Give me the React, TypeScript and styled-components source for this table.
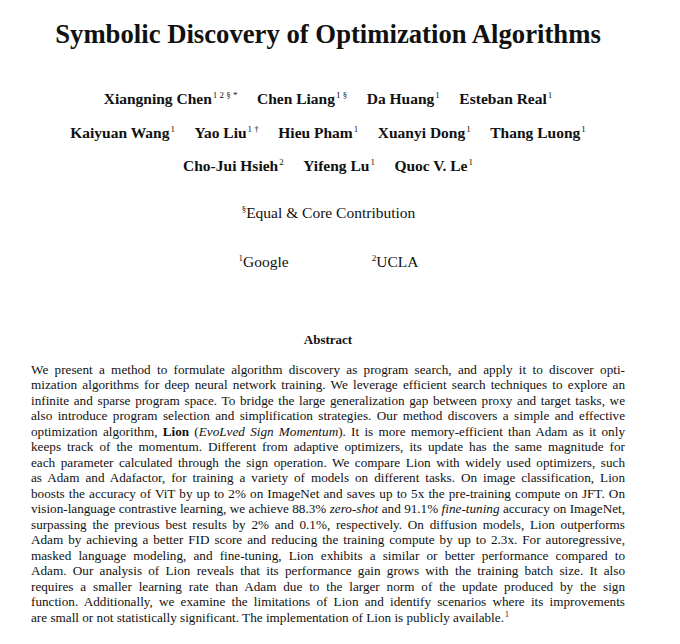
import * as React from "react";
import styled, { createGlobalStyle } from "styled-components";

const Global = createGlobalStyle`
  html, body {
    margin: 0;
    padding: 0;
    background: #ffffff;
  }
  body {
    font-family: "Liberation Serif", "Times New Roman", serif;
    color: #111111;
  }
`;

const Page = styled.main`
  width: 594px;
  margin-left: 31px;
  padding-top: 19px;
`;

const Title = styled.h1`
  margin: 0;
  font-size: 26.7px;
  line-height: 30px;
  font-weight: 700;
  text-align: center;
  color: #111;
`;

const Authors = styled.div`
  margin-top: 33px;
  display: flex;
  flex-direction: column;
  align-items: center;
`;

const AuthorRow = styled.div`
  display: flex;
  justify-content: center;
  gap: 19.5px;
  font-size: 15.5px;
  font-weight: 700;
  line-height: 33.5px;
`;

const Sup = styled.sup`
  font-size: 0.58em;
  line-height: 0;
  vertical-align: 0.62em;
  font-weight: 400;
  margin-left: 1px;
`;

const Note = styled.div`
  margin-top: 20px;
  font-size: 15.5px;
  line-height: 20px;
  text-align: center;
`;

const Affiliations = styled.div`
  margin: 29px auto 0;
  width: 181px;
  display: flex;
  justify-content: space-between;
  font-size: 15.5px;
  line-height: 20px;
`;

const AbstractHeading = styled.h2`
  margin: 60px 0 0;
  font-size: 13px;
  line-height: 16px;
  font-weight: 700;
  text-align: center;
`;

const AbstractBody = styled.div`
  margin-top: 14px;
  font-size: 13.2px;
  line-height: 15.5px;
`;

const Line = styled.span<{ $last?: boolean }>`
  display: block;
  text-align: ${(p) => (p.$last ? "left" : "justify")};
  text-align-last: ${(p) => (p.$last ? "left" : "justify")};
`;

type Author = { name: string; marks: string };

const authorRows: Author[][] = [
  [
    { name: "Xiangning Chen", marks: "1 2 § *" },
    { name: "Chen Liang", marks: "1 §" },
    { name: "Da Huang", marks: "1" },
    { name: "Esteban Real", marks: "1" },
  ],
  [
    { name: "Kaiyuan Wang", marks: "1" },
    { name: "Yao Liu", marks: "1 †" },
    { name: "Hieu Pham", marks: "1" },
    { name: "Xuanyi Dong", marks: "1" },
    { name: "Thang Luong", marks: "1" },
  ],
  [
    { name: "Cho-Jui Hsieh", marks: "2" },
    { name: "Yifeng Lu", marks: "1" },
    { name: "Quoc V. Le", marks: "1" },
  ],
];

const lines: React.ReactNode[] = [
  "We present a method to formulate algorithm discovery as program search, and apply it to discover opti-",
  "mization algorithms for deep neural network training. We leverage efficient search techniques to explore an",
  "infinite and sparse program space. To bridge the large generalization gap between proxy and target tasks, we",
  "also introduce program selection and simplification strategies. Our method discovers a simple and effective",
  <>
    optimization algorithm, <b>Lion</b> (<i>EvoLved Sign Momentum</i>). It is more memory-efficient than Adam as it only
  </>,
  "keeps track of the momentum. Different from adaptive optimizers, its update has the same magnitude for",
  "each parameter calculated through the sign operation. We compare Lion with widely used optimizers, such",
  "as Adam and Adafactor, for training a variety of models on different tasks. On image classification, Lion",
  "boosts the accuracy of ViT by up to 2% on ImageNet and saves up to 5x the pre-training compute on JFT. On",
  <>
    vision-language contrastive learning, we achieve 88.3% <i>zero-shot</i> and 91.1% <i>fine-tuning</i> accuracy on ImageNet,
  </>,
  "surpassing the previous best results by 2% and 0.1%, respectively. On diffusion models, Lion outperforms",
  "Adam by achieving a better FID score and reducing the training compute by up to 2.3x. For autoregressive,",
  "masked language modeling, and fine-tuning, Lion exhibits a similar or better performance compared to",
  "Adam. Our analysis of Lion reveals that its performance gain grows with the training batch size. It also",
  "requires a smaller learning rate than Adam due to the larger norm of the update produced by the sign",
  "function. Additionally, we examine the limitations of Lion and identify scenarios where its improvements",
  <>
    are small or not statistically significant. The implementation of Lion is publicly available.<Sup>1</Sup>
  </>,
];

const App: React.FunctionComponent = () => (
  <>
    <Global />
    <Page>
      <Title>Symbolic Discovery of Optimization Algorithms</Title>
      <Authors>
        {authorRows.map((row, i) => (
          <AuthorRow key={i}>
            {row.map((a) => (
              <span key={a.name}>
                {a.name}
                <Sup>{a.marks}</Sup>
              </span>
            ))}
          </AuthorRow>
        ))}
      </Authors>
      <Note>
        <Sup>§</Sup>Equal &amp; Core Contribution
      </Note>
      <Affiliations>
        <span>
          <Sup>1</Sup>Google
        </span>
        <span>
          <Sup>2</Sup>UCLA
        </span>
      </Affiliations>
      <AbstractHeading>Abstract</AbstractHeading>
      <AbstractBody>
        {lines.map((l, i) => (
          <Line key={i} $last={i === lines.length - 1}>
            {l}
          </Line>
        ))}
      </AbstractBody>
    </Page>
  </>
);

export default App;
